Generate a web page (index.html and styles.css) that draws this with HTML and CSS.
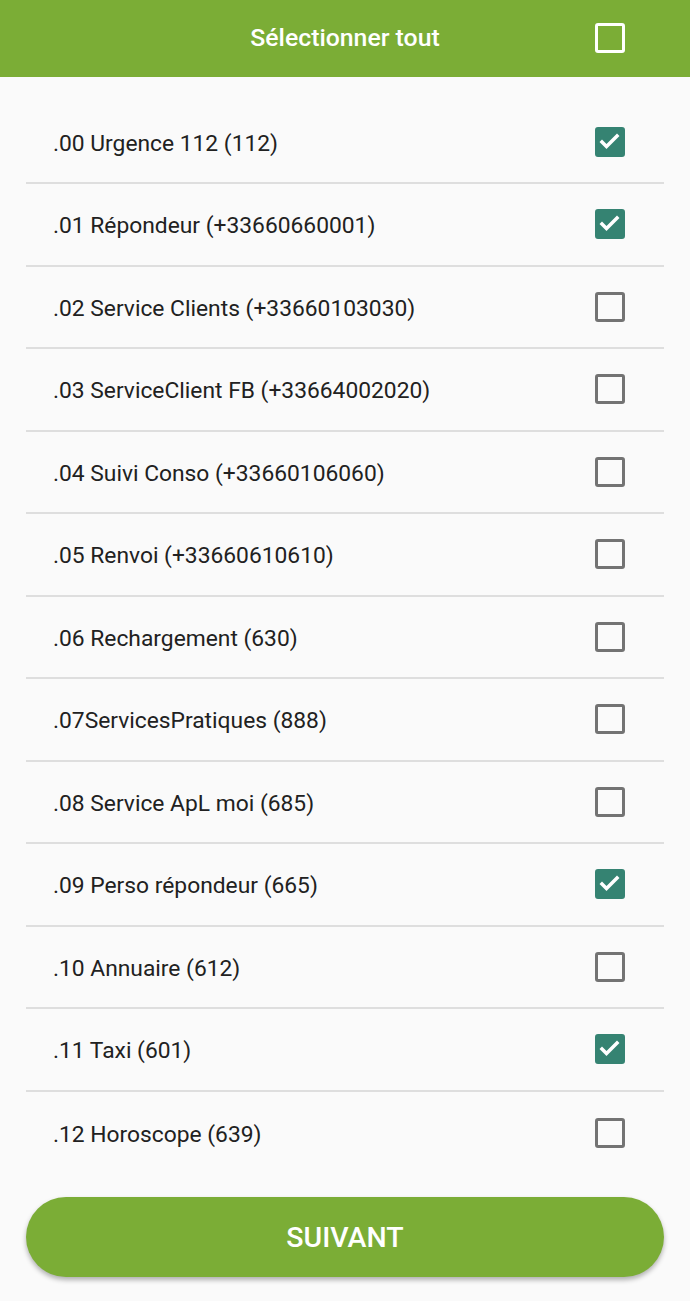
FILE: index.html
```html
<!DOCTYPE html>
<html lang="fr">
<head>
<meta charset="utf-8">
<link rel="stylesheet" href="styles.css">
</head>
<body>
<header class="topbar">
  <div class="topbar-title">Sélectionner tout</div>
  <span class="cb cb-white"></span>
</header>
<main class="list">
  <div class="row"><span class="label">.00 Urgence 112 (112)</span><span class="cb cb-on"><svg viewBox="0 0 30 30"><path d="M7 15 L11.5 19.5 L22 9"/></svg></span></div>
  <div class="row"><span class="label">.01 Répondeur (+33660660001)</span><span class="cb cb-on"><svg viewBox="0 0 30 30"><path d="M7 15 L11.5 19.5 L22 9"/></svg></span></div>
  <div class="row"><span class="label">.02 Service Clients (+33660103030)</span><span class="cb"></span></div>
  <div class="row"><span class="label">.03 ServiceClient FB (+33664002020)</span><span class="cb"></span></div>
  <div class="row"><span class="label">.04 Suivi Conso (+33660106060)</span><span class="cb"></span></div>
  <div class="row"><span class="label">.05 Renvoi (+33660610610)</span><span class="cb"></span></div>
  <div class="row"><span class="label">.06 Rechargement (630)</span><span class="cb"></span></div>
  <div class="row"><span class="label">.07ServicesPratiques (888)</span><span class="cb"></span></div>
  <div class="row"><span class="label">.08 Service ApL moi (685)</span><span class="cb"></span></div>
  <div class="row"><span class="label">.09 Perso répondeur (665)</span><span class="cb cb-on"><svg viewBox="0 0 30 30"><path d="M7 15 L11.5 19.5 L22 9"/></svg></span></div>
  <div class="row"><span class="label">.10 Annuaire (612)</span><span class="cb"></span></div>
  <div class="row"><span class="label">.11 Taxi (601)</span><span class="cb cb-on"><svg viewBox="0 0 30 30"><path d="M7 15 L11.5 19.5 L22 9"/></svg></span></div>
  <div class="row"><span class="label">.12 Horoscope (639)</span><span class="cb"></span></div>
</main>
<div class="footer">
  <button class="btn">SUIVANT</button>
</div>
</body>
</html>
```
FILE: styles.css
```css
* { box-sizing: border-box; }
html, body { margin: 0; padding: 0; }
body {
  background: #fafafa;
  font-family: Roboto, "Noto Sans", sans-serif;
  width: 690px;
  height: 1301px;
  overflow: hidden;
}
.topbar {
  height: 77px;
  background: #7bad36;
  display: flex;
  align-items: center;
  justify-content: center;
  position: relative;
  padding-bottom: 3px;
}
.topbar-title {
  color: #ffffff;
  font-size: 24.8px;
  font-weight: 500;
}
.topbar .cb {
  position: absolute;
  right: 65px;
  top: 23px;
}
.cb {
  width: 30px;
  height: 30px;
  border: 3px solid #737373;
  border-radius: 3px;
  display: flex;
  align-items: center;
  justify-content: center;
  flex: none;
}
.cb-white { border-color: #ffffff; }
.cb-on {
  background: #358372;
  border-color: #358372;
}
.cb-on svg {
  width: 30px;
  height: 30px;
  flex: none;
}
.cb-on path {
  fill: none;
  stroke: #ffffff;
  stroke-width: 3.5;
  stroke-linecap: square;
}
.list {
  padding: 24.5px 26px 0;
}
.row {
  height: 82.5px;
  border-bottom: 2px solid #dedede;
  display: flex;
  align-items: center;
  justify-content: space-between;
  padding: 0 39px 0 27px;
}
.row:last-child { border-bottom: none; }
.label {
  font-size: 22.8px;
  color: #212121;
  padding-top: 3px;
}
.footer {
  padding: 23px 26px 0;
}
.btn {
  display: block;
  width: 100%;
  height: 80px;
  border: none;
  border-radius: 40px;
  background: #7bad36;
  color: #ffffff;
  font-family: Roboto, "Noto Sans", sans-serif;
  font-size: 28.5px;
  font-weight: 500;
  box-shadow: 0 3px 5px rgba(0,0,0,0.3);
}
```
